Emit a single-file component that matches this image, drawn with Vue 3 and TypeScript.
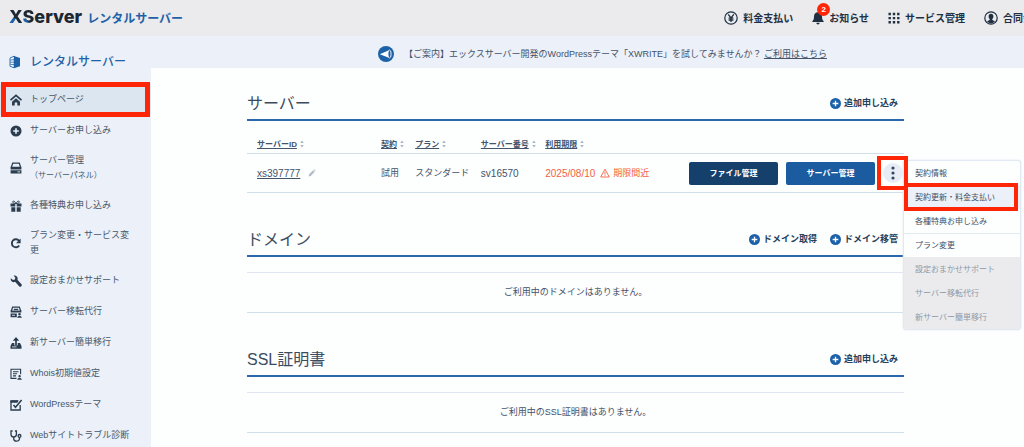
<script setup lang="ts">
import { ref } from 'vue'

interface SideItem {
  label: string
  icon: string
  note?: string
  current?: boolean
}
interface MenuItem {
  label: string
  marked?: boolean
  divided?: boolean
  disabled?: boolean
}
interface Section {
  title: string
  actions: string[]
  empty: string
}

const sideItems: SideItem[] = [
  { label: 'トップページ', icon: 'home', current: true },
  { label: 'サーバーお申し込み', icon: 'plus' },
  { label: 'サーバー管理', icon: 'server', note: '（サーバーパネル）' },
  { label: '各種特典お申し込み', icon: 'gift' },
  { label: 'プラン変更・サービス変更', icon: 'cycle' },
  { label: '設定おまかせサポート', icon: 'wrench' },
  { label: 'サーバー移転代行', icon: 'transfer' },
  { label: '新サーバー簡単移行', icon: 'upload' },
  { label: 'Whois初期値設定', icon: 'whois' },
  { label: 'WordPressテーマ', icon: 'theme' },
  { label: 'Webサイトトラブル診断', icon: 'scope' },
]

const columns: string[] = ['サーバーID', '契約', 'プラン', 'サーバー番号', '利用期限']

const menuItems: MenuItem[] = [
  { label: '契約情報' },
  { label: '契約更新・料金支払い', marked: true },
  { label: '各種特典お申し込み' },
  { label: 'プラン変更', divided: true },
  { label: '設定おまかせサポート', disabled: true },
  { label: 'サーバー移転代行', disabled: true },
  { label: '新サーバー簡単移行', disabled: true },
]

const sections: Section[] = [
  { title: 'ドメイン', actions: ['ドメイン取得', 'ドメイン移管'], empty: 'ご利用中のドメインはありません。' },
  { title: 'SSL証明書', actions: ['追加申し込み'], empty: 'ご利用中のSSL証明書はありません。' },
]

const menuOpen = ref(true)
</script>

<template>
  <div class="app">
    <header class="topbar">
      <a class="logo" href="#">
        <span class="logo-main"><span class="logo-x">X</span><span class="logo-s">S</span>erver</span>
        <span class="logo-sub">レンタルサーバー</span>
      </a>
      <nav class="topnav">
        <a href="#" class="topnav-item">
          <svg class="i14" viewBox="0 0 14 14" fill="none" stroke="currentColor">
            <circle cx="7" cy="7" r="6.2" stroke-width="1.2" />
            <path d="M4.2 3.4 7 7l2.8-3.6M7 7v4M4.6 7.2h4.8M4.6 9h4.8" stroke-width="1.3" />
          </svg>
          料金支払い
        </a>
        <a href="#" class="topnav-item notice">
          <svg class="bell" viewBox="0 0 12 14" fill="currentColor">
            <path d="M6 1.2c2.6 0 4 1.9 4 4.3 0 2.500.6 3.700 1.700 4.700v.8H.3v-.8C1.400 9.200 2 8 2 5.500c0-2.400 1.400-4.300 4-4.300zM4.300 11.700h3.400a1.700 1.700 0 0 1-3.400 0z" />
          </svg>
          お知らせ
          <span class="badge">2</span>
        </a>
        <a href="#" class="topnav-item">
          <svg class="i12" viewBox="0 0 12 12" fill="currentColor">
            <path d="M.5.8h2.400v2.400H.5zM4.800.8h2.400v2.400H4.800zM9.100.8h2.400v2.400H9.100zM.5 4.900h2.400v2.400H.5zM4.800 4.900h2.400v2.400H4.800zM9.100 4.900h2.400v2.400H9.100zM.5 9h2.400v2.400H.5zM4.800 9h2.400v2.400H4.800zM9.100 9h2.400v2.400H9.100z" />
          </svg>
          サービス管理
        </a>
        <a href="#" class="topnav-item account">
          <svg class="i14" viewBox="0 0 14 14">
            <circle cx="7" cy="7" r="6.2" fill="none" stroke="currentColor" stroke-width="1.200" />
            <path d="M7 2.700c1.500 0 2.400 1.100 2.400 2.600 0 1.200-.4 2.200-1.100 2.800v.8l2.700 1.300A5.200 5.200 0 0 1 7 12.400a5.200 5.200 0 0 1-4-2.200l2.700-1.300v-.8C5 7.500 4.600 6.500 4.600 5.300 4.600 3.800 5.500 2.700 7 2.700z" fill="currentColor" />
          </svg>
          合同会
        </a>
      </nav>
    </header>

    <div class="body">
      <aside class="sidebar">
        <a class="side-title" href="#">
          <svg class="cube" viewBox="0 0 12 14">
            <path d="M1 3 5.200 1.200v11.600L1 11.200z" fill="#fff" stroke="#1d62a8" stroke-width=".9" />
            <path d="M1.200 5.200 5 4.600M1.200 7.200H5M1.200 9.200l3.800.5" stroke="#1d62a8" stroke-width=".8" />
            <path d="M5 .9 11 3v8.200L5 13.200z" fill="#1d62a8" />
          </svg>
          レンタルサーバー
        </a>
        <nav class="side-nav">
          <a v-for="item in sideItems" :key="item.label" href="#" class="side-item" :class="{ current: item.current }">
            <svg class="i12" viewBox="0 0 12 12" fill="none" stroke="currentColor" stroke-width="1.400">
              <template v-if="item.icon === 'home'">
                <path d="M.5 6.200 6 1.400l5.500 4.800" stroke-width="1.700" />
                <path d="M6 4.300 10 7.700V11.500H7.300V8.600H4.700v2.900H2V7.700z" fill="currentColor" stroke="none" />
              </template>
              <template v-else-if="item.icon === 'plus'">
                <circle cx="6" cy="6" r="5.500" fill="currentColor" stroke="none" />
                <path d="M6 3.200v5.600M3.200 6h5.600" stroke="#ecf0f8" stroke-width="1.600" />
              </template>
              <template v-else-if="item.icon === 'server'">
                <path d="M1.300 5.500 2.700 1.200h6.600l1.400 4.300" stroke-width="1.200" />
                <path d="M.6 4.700h10.800v2.700H.6zM.6 8.300h10.800v3.200H.6z" fill="currentColor" stroke="none" />
                <path d="M7.500 9.900h2.600" stroke="#ecf0f8" stroke-width=".9" />
              </template>
              <template v-else-if="item.icon === 'gift'">
                <path d="M.5 3.500h4.800v3H.5zM6.700 3.500h4.800v3H6.700zM1.300 7.200h4v4.500h-4zM6.700 7.200h4v4.500h-4z" fill="currentColor" stroke="none" />
                <path d="M5.800 3.500C5.200 1.200 2.800.2 2.700 2c0 .8.8 1.300 3.100 1.500zM6.200 3.500C6.800 1.200 9.200.2 9.300 2c0 .8-.8 1.300-3.100 1.500z" stroke-width="1" />
              </template>
              <template v-else-if="item.icon === 'cycle'">
                <path d="M9.200 8.500A4 4 0 1 1 9 3.800" stroke-width="1.900" />
                <path d="M10.600 1.500v4.700H6z" fill="currentColor" stroke="none" />
              </template>
              <path
                v-else-if="item.icon === 'wrench'"
                d="M3.600.7a3 3 0 0 1 3.800 4L11.300 9a1.500 1.500 0 0 1-2.200 2.200L5.100 6.800a3 3 0 0 1-4.200-3.600L3 5l1.900-.4L5.300 2.600z"
                fill="currentColor"
                stroke="none"
              />
              <template v-else-if="item.icon === 'transfer'">
                <path d="M1.300 5 2.600 1.200h6.800L10.700 5M3.800 3.300h4.400" stroke-width="1.200" />
                <path d="M.6 4.600h10.800v2H.6zM.6 7.500h6.200v3.700H.6zM9.500 7a1.300 1.300 0 1 1 0 2.600A1.300 1.300 0 0 1 9.500 7zM7.200 11.800c0-2.500 4.600-2.500 4.600 0z" fill="currentColor" stroke="none" />
                <path d="M2 9.300h3" stroke="#ecf0f8" stroke-width=".8" />
              </template>
              <template v-else-if="item.icon === 'upload'">
                <path d="M6 8V2" stroke-width="1.700" />
                <path d="M6 0l3.200 3.700H2.800zM2 6h2.300v2.300h3.400V6H10l1.500 3v2.800H.5V9z" fill="currentColor" stroke="none" />
                <path d="M2 9.900h4.500" stroke="#ecf0f8" stroke-width=".8" />
              </template>
              <template v-else-if="item.icon === 'whois'">
                <path d="M6.500 10.400H1V1.200h9.600v5M3 3.700h5.500M3 5.800h4M3 7.900h3" stroke-width="1.100" />
                <path d="M9.600 7a1.200 1.200 0 1 1 0 2.400 1.200 1.200 0 0 1 0-2.400zM7.300 11.800c0-2.500 4.500-2.500 4.500 0z" fill="currentColor" stroke="none" />
              </template>
              <template v-else-if="item.icon === 'theme'">
                <path d="M10.200 6v5H1V2h7" stroke-width="1.300" />
                <path d="M.5 1.500h8.300L7.300 3.800H.5z" fill="currentColor" stroke="none" />
                <path d="M3.500 6l2 2.300L11.600 1" stroke-width="1.500" />
              </template>
              <template v-else>
                <path d="M2.600 1H1v3.300a2.700 2.700 0 0 0 5.400 0V1H4.900M3.700 7v1.500c0 3.600 5.800 3.600 5.800 0V7.400" stroke-width="1.300" />
                <circle cx="9.500" cy="5.900" r="1.400" stroke-width="1.300" />
              </template>
            </svg>
            <span class="side-label">{{ item.label }}<small v-if="item.note">{{ item.note }}</small></span>
          </a>
        </nav>
      </aside>

      <main class="main">
        <p class="banner">
          <svg class="i16" viewBox="0 0 16 16">
            <circle cx="8" cy="8" r="8" fill="#1d62a8" />
            <path d="M1.800 8.300 11.500 4v8z" fill="#fff" />
            <ellipse cx="11.500" cy="8" rx="1.600" ry="4" fill="#1d62a8" stroke="#fff" stroke-width=".9" />
          </svg>
          <span>【ご案内】エックスサーバー開発のWordPressテーマ「XWRITE」を試してみませんか？ <a href="#">ご利用はこちら</a></span>
        </p>

        <div class="content">
          <section class="section">
            <div class="section-head">
              <h2>サーバー</h2>
              <div class="actions">
                <a href="#" class="action">
                  <svg class="i11" viewBox="0 0 11 11"><circle cx="5.500" cy="5.500" r="5.500" fill="#1d62a8" /><path d="M5.500 2.700v5.600M2.700 5.500h5.600" stroke="#fff" stroke-width="1.300" /></svg>
                  追加申し込み
                </a>
              </div>
            </div>
            <table class="servers">
              <thead>
                <tr>
                  <th v-for="col in columns" :key="col" scope="col">
                    <button type="button" class="sort">
                      <span>{{ col }}</span>
                      <svg viewBox="0 0 4 8" fill="#a9b7c6"><path d="M2 .6 3.800 3H.2zM2 7.400.2 5h3.600z" /></svg>
                    </button>
                  </th>
                  <th aria-label="操作"></th>
                </tr>
              </thead>
              <tbody>
                <tr>
                  <td>
                    <div class="cell">
                      <a href="#" class="num">xs397777</a>
                      <button type="button" class="edit" aria-label="編集">
                        <svg viewBox="0 0 8 8"><path d="M.6 7.400 1.100 5.300 5.200 1.200 6.800 2.800 2.700 6.900zM5.700.8l.6-.5 1.400 1.400-.5.6z" fill="#b3bdc9" /></svg>
                      </button>
                    </div>
                  </td>
                  <td>試用</td>
                  <td>スタンダード</td>
                  <td class="num">sv16570</td>
                  <td>
                    <div class="cell due">
                      <span class="num">2025/08/10</span>
                      <span class="warn">
                        <svg viewBox="0 0 10 10" fill="none" stroke="currentColor" stroke-width=".9"><path d="M5 1.200 9.300 9H.7zM5 3.800v2.700M5 7.200v.9" /></svg>
                        期限間近
                      </span>
                    </div>
                  </td>
                  <td>
                    <div class="ops">
                      <button type="button" class="btn btn-dark">ファイル管理</button>
                      <button type="button" class="btn">サーバー管理</button>
                      <div class="more">
                        <button type="button" class="kebab" aria-label="メニュー" :aria-expanded="menuOpen" @click="menuOpen = !menuOpen">
                          <svg viewBox="0 0 20 20" fill="#33495e"><circle cx="10" cy="5" r="1.600" /><circle cx="10" cy="10" r="1.600" /><circle cx="10" cy="15" r="1.600" /></svg>
                        </button>
                        <ul v-if="menuOpen" class="menu">
                          <li v-for="m in menuItems" :key="m.label" :class="{ marked: m.marked, divided: m.divided }">
                            <button type="button" :disabled="m.disabled">{{ m.label }}</button>
                          </li>
                        </ul>
                      </div>
                    </div>
                  </td>
                </tr>
              </tbody>
            </table>
          </section>

          <section v-for="s in sections" :key="s.title" class="section">
            <div class="section-head">
              <h2>{{ s.title }}</h2>
              <div class="actions">
                <a v-for="a in s.actions" :key="a" href="#" class="action">
                  <svg class="i11" viewBox="0 0 11 11"><circle cx="5.500" cy="5.500" r="5.500" fill="#1d62a8" /><path d="M5.500 2.700v5.600M2.700 5.500h5.600" stroke="#fff" stroke-width="1.300" /></svg>
                  {{ a }}
                </a>
              </div>
            </div>
            <p class="empty">{{ s.empty }}</p>
          </section>
        </div>
      </main>
    </div>
  </div>
</template>

<style>
html {
  scrollbar-width: none;
  background: #fdfefe;
}
</style>

<style scoped>
.app {
  display: flex;
  flex-direction: column;
  min-height: 100vh;
  font-family: "Liberation Sans", "Noto Sans CJK JP", sans-serif;
  font-size: 9px;
  line-height: 15px;
  color: #42536a;
}
.app *,
.app *::after {
  box-sizing: border-box;
}
a {
  color: inherit;
}
button {
  margin: 0;
  padding: 0;
  border: 0;
  background: none;
  font: inherit;
  color: inherit;
  cursor: pointer;
}
svg {
  display: block;
  flex: none;
}
.i11 { width: 11px; height: 11px; }
.i12 { width: 12px; height: 12px; }
.i14 { width: 14px; height: 14px; }
.i16 { width: 16px; height: 16px; }
.bell,
.cube {
  width: 12px;
  height: 14px;
}

.topbar {
  display: flex;
  align-items: center;
  justify-content: space-between;
  height: 36px;
  padding-left: 9px;
  background: #ebebed;
}
.logo {
  display: flex;
  align-items: baseline;
  gap: 5px;
  text-decoration: none;
  white-space: nowrap;
}
.logo-main {
  font-family: Inter, "Liberation Sans", sans-serif;
  font-size: 18px;
  font-weight: 800;
  color: #1c2732;
}
.logo-x,
.logo-s {
  background: linear-gradient(45deg, #1d62a8 42%, #1c2732 42%);
  background-clip: text;
  color: transparent;
}
.logo-s {
  background-image: linear-gradient(45deg, #1d62a8 36%, #1c2732 36%);
}
.logo-sub {
  font-size: 12px;
  font-weight: 700;
  color: #1d62a8;
}
.topnav {
  display: flex;
  gap: 19px;
}
.topnav-item {
  display: flex;
  align-items: center;
  gap: 5px;
  font-size: 10px;
  font-weight: 700;
  color: #1f3042;
  text-decoration: none;
  white-space: nowrap;
}
.notice {
  position: relative;
}
.badge {
  position: absolute;
  left: 5px;
  top: -8px;
  width: 13px;
  height: 13px;
  border-radius: 50%;
  background: #fe2606;
  color: #fff;
  font-size: 8px;
  line-height: 13px;
  text-align: center;
}
.account {
  width: 40px;
  overflow: hidden;
}

.body {
  display: flex;
  flex: 1;
}
.sidebar {
  flex: none;
  width: 151px;
  background: #ecf0f8;
}
.side-title {
  display: flex;
  align-items: center;
  gap: 9px;
  height: 48px;
  padding: 4px 0 0 9px;
  font-size: 12px;
  font-weight: 500;
  color: #1d62a8;
  text-decoration: none;
}
.side-item {
  position: relative;
  display: flex;
  align-items: center;
  gap: 8px;
  min-height: 31px;
  padding: 7px 14px 7px 10px;
  color: #2a3c4e;
  text-decoration: none;
}
.side-label {
  color: #46586a;
}
.side-label small {
  display: block;
  font-size: 8px;
}
.current {
  background: #dce6f1;
}
.current::after {
  content: "";
  position: absolute;
  inset: -2px 1px;
  border: 5px solid #fe2606;
}

.main {
  flex: 1;
  min-width: 0;
  background: #fdfefe;
}
.banner {
  display: flex;
  align-items: center;
  gap: 10px;
  height: 32px;
  margin: 0;
  padding: 4px 0 0 26%;
  background: #ecf0f8;
  white-space: nowrap;
}
.content {
  padding: 17px 120px 0 96px;
}
.section {
  margin-bottom: 28px;
}
.section-head {
  display: flex;
  align-items: center;
  justify-content: space-between;
  height: 36px;
  padding: 3px 6px 0 0;
  border-bottom: 2px solid #2b68ab;
}
h2 {
  margin: 0;
  font-size: 16px;
  font-weight: 400;
  line-height: 24px;
  color: #3c4c5e;
}
.actions {
  display: flex;
  gap: 13px;
}
.action {
  display: flex;
  align-items: center;
  gap: 3px;
  font-weight: 700;
  color: #25405a;
  text-decoration: none;
}
.servers {
  width: 100%;
  margin-top: 14px;
  table-layout: fixed;
  border-collapse: separate;
  border-spacing: 0;
  text-align: left;
}
th,
td {
  padding: 0;
  border-bottom: 1px solid #d3deeb;
  white-space: nowrap;
}
th {
  height: 19px;
  font-size: 8px;
}
td {
  height: 39px;
}
th:first-child,
td:first-child {
  padding-left: 10px;
}
th:nth-child(1) { width: 20.4%; }
th:nth-child(2) { width: 5.2%; }
th:nth-child(3) { width: 10%; }
th:nth-child(4) { width: 9.8%; }
th:nth-child(5) { width: 21.9%; }
.sort {
  display: flex;
  align-items: center;
  gap: 3px;
  font-weight: 700;
}
.sort span {
  text-decoration: underline;
}
.sort svg {
  width: 4px;
  height: 8px;
}
.cell {
  display: flex;
  align-items: center;
  gap: 8px;
}
.num {
  font-size: 10px;
}
.edit svg {
  width: 8px;
  height: 8px;
}
.due {
  gap: 5px;
  color: #f4623f;
}
.warn {
  display: flex;
  align-items: center;
  gap: 3px;
}
.warn svg {
  width: 10px;
  height: 10px;
}
.ops {
  display: flex;
  align-items: center;
  gap: 8px;
  padding-right: 1px;
}
.btn {
  flex: 1;
  height: 23px;
  border-radius: 2px;
  background: #1b5b9f;
  color: #fff;
  font-size: 8px;
  font-weight: 700;
}
.btn-dark {
  background: #15406b;
}
.more {
  position: relative;
  width: 20px;
}
.kebab {
  display: block;
  width: 20px;
  height: 20px;
  border-radius: 50%;
  background: #e8edf5;
}
.more::after {
  content: "";
  position: absolute;
  inset: -7px -5px -7px -6px;
  border: 4px solid #fe2606;
  pointer-events: none;
}
.menu {
  position: absolute;
  top: -3px;
  left: 20px;
  width: 118px;
  margin: 0;
  padding: 0;
  border: 1px solid #e2e9f3;
  border-radius: 3px;
  background: #fdfefe;
  box-shadow: 0 0 2px #d9e2ee;
  list-style: none;
}
.menu li {
  position: relative;
}
.menu button {
  display: block;
  width: 100%;
  height: 24px;
  padding-left: 11px;
  font-size: 8px;
  text-align: left;
}
.menu button:disabled {
  background: #ebebed;
  color: #8d98a6;
}
.divided {
  box-shadow: inset 0 1px #e4eaf2;
}
.marked {
  background: #ecf0f8;
}
.marked::after {
  content: "";
  position: absolute;
  inset: -2px 2px -2px 0;
  border: 4px solid #fe2606;
  pointer-events: none;
}
.empty {
  margin: 15px 0 0;
  padding: 12px 0;
  border-top: 1px solid #dfe6ef;
  border-bottom: 1px solid #d3deeb;
  text-align: center;
}
</style>
